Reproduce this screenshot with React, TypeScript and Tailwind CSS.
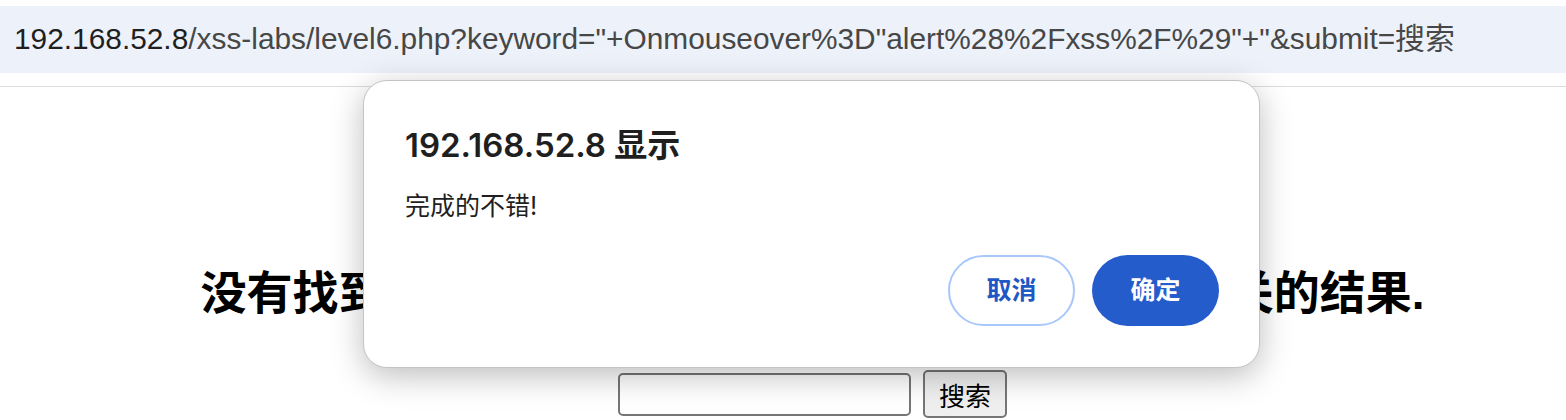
import React from 'react';

const cjk = '"Liberation Sans", "Noto Sans CJK SC", sans-serif';
const ui = 'Inter, "Noto Sans CJK SC", sans-serif';

const AddressBar: React.FC = () => (
  <div className="h-[87px] border-b border-[#dcdcdc] bg-white pt-[6px]">
    <div
      className="flex h-[67px] items-center bg-[#edf2fa] pl-[14px] text-[29.85px] whitespace-nowrap"
      style={{ fontFamily: cjk }}
    >
      <span className="text-[#1f1f1f]">192.168.52.8</span>
      <span className="text-[#474747]">
        /xss-labs/level6.php?keyword=&quot;+Onmouseover%3D&quot;alert%28%2Fxss%2F%29&quot;+&quot;&amp;submit=搜索
      </span>
    </div>
  </div>
);

const AlertDialog: React.FC = () => (
  <div
    className="absolute left-[363px] top-[80px] flex h-[288px] w-[897px] flex-col rounded-[24px] border border-[#c4c4c4] bg-white pl-[41px] pr-[40px] pt-[44px] pb-[41px] shadow-[0_8px_32px_rgba(0,0,0,0.26)]"
    style={{ fontFamily: ui }}
  >
    <div className="text-[33px] leading-[40px] font-semibold text-[#1f1f1f]">192.168.52.8 显示</div>
    <div className="mt-[24px] text-[25px] leading-[34px] text-[#1f1f1f]">完成的不错!</div>
    <div className="mt-auto flex justify-end gap-[17px]">
      <button className="h-[71px] w-[127px] rounded-full border-2 border-[#a8c7fa] bg-white text-[25px] font-bold text-[#1f57c4]">
        取消
      </button>
      <button className="h-[71px] w-[127px] rounded-full bg-[#255ccb] text-[25px] font-bold text-white">
        确定
      </button>
    </div>
  </div>
);

export default function App() {
  return (
    <div className="relative h-[420px] w-[1566px] overflow-hidden bg-white">
      <AddressBar />
      <div className="pl-[59px] text-center">
        <h2
          className="mt-[183px] whitespace-nowrap text-[46px] leading-[46px] font-bold text-black"
          style={{ fontFamily: '"Liberation Sans", "Noto Sans CJK SC", sans-serif' }}
        >
          没有找到和
          <span className="tracking-[2.4px]">&quot; Onmouseover=&quot;alert(/xss/)&quot; &quot;</span>
          相关的结果.
        </h2>
        <form className="mt-[54px] flex items-center justify-center gap-[12px]">
          <input className="h-[43px] w-[293px] rounded-[5px] border-2 border-[#767676] bg-white" />
          <button
            type="button"
            className="h-[48px] w-[84px] rounded-[5px] border-2 border-[#767676] bg-[#efefef] text-[26px] text-black"
            style={{ fontFamily: '"Noto Sans CJK SC", sans-serif' }}
          >
            搜索
          </button>
        </form>
      </div>
      <AlertDialog />
    </div>
  );
}
